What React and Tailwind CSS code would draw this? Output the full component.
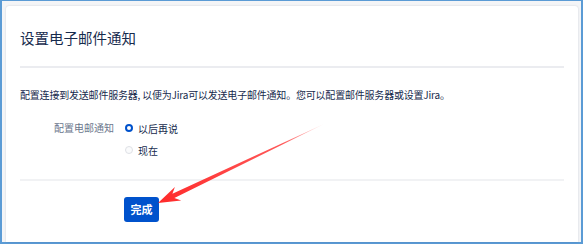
export default function App() {
  const font = { fontFamily: '"Noto Sans CJK SC", "Noto Sans", sans-serif' };

  return (
    <div className="relative w-[583px] h-[244px] overflow-hidden" style={font}>
      <div className="w-full h-full border-2 border-t border-[#5b9bd5] bg-[#f4f5f7] pt-[5px] pl-[4px] pr-[3px]">
        <div className="h-full bg-white rounded-t-[3px] shadow-[0_0_2px_rgba(9,30,66,0.18)] px-[14px] pt-[22px]">
          <h1 className="text-[14.5px] leading-[20px] text-[#172b4d] font-normal">设置电子邮件通知</h1>
          <div className="mt-[18px] h-[2px] bg-[#ebecf0]" />

          <p className="mt-[20px] text-[10px] leading-[14px] tracking-[-0.2px] text-[#172b4d] whitespace-nowrap">
            配置连接到发送邮件服务器, 以便为Jira可以发送电子邮件通知。您可以配置邮件服务器或设置Jira。
          </p>

          <div className="mt-[15px] flex items-start gap-[11px]">
            <div className="w-[94px] text-right text-[10px] leading-[22px] text-[#6b778c]">配置电邮通知</div>
            <div className="flex flex-col">
              <label className="flex items-center gap-[5px] h-[22px] text-[10px] text-[#172b4d]">
                <span className="w-[8px] h-[8px] rounded-full border-[2.5px] border-[#0052cc] bg-white" />
                以后再说
              </label>
              <label className="flex items-center gap-[5px] h-[22px] text-[10px] text-[#172b4d]">
                <span className="w-[8px] h-[8px] rounded-full border border-[#dfe1e6] bg-[#fafbfc]" />
                现在
              </label>
            </div>
          </div>

          <div className="mt-[18px] h-[2px] bg-[#f1f2f4]" />

          <button className="mt-[16px] ml-[104px] w-[35px] h-[25px] rounded-[3px] bg-[#0052cc] text-white text-[11px] font-bold flex items-center justify-center">
            完成
          </button>
        </div>
      </div>

      <svg className="absolute left-0 top-0 pointer-events-none" width="583" height="244" viewBox="0 0 583 244">
        <defs>
          <linearGradient id="arrowFade" x1="324" y1="124" x2="158" y2="203" gradientUnits="userSpaceOnUse">
            <stop offset="0" stopColor="#ff3b3b" stopOpacity="0.15" />
            <stop offset="0.25" stopColor="#ff3b3b" stopOpacity="0.85" />
            <stop offset="1" stopColor="#ff2a2a" />
          </linearGradient>
        </defs>
        <polygon
          points="158,203 174.9,187 172.4,193.8 324,124 174.4,198 181.2,200.4"
          fill="url(#arrowFade)"
        />
      </svg>
    </div>
  );
}
